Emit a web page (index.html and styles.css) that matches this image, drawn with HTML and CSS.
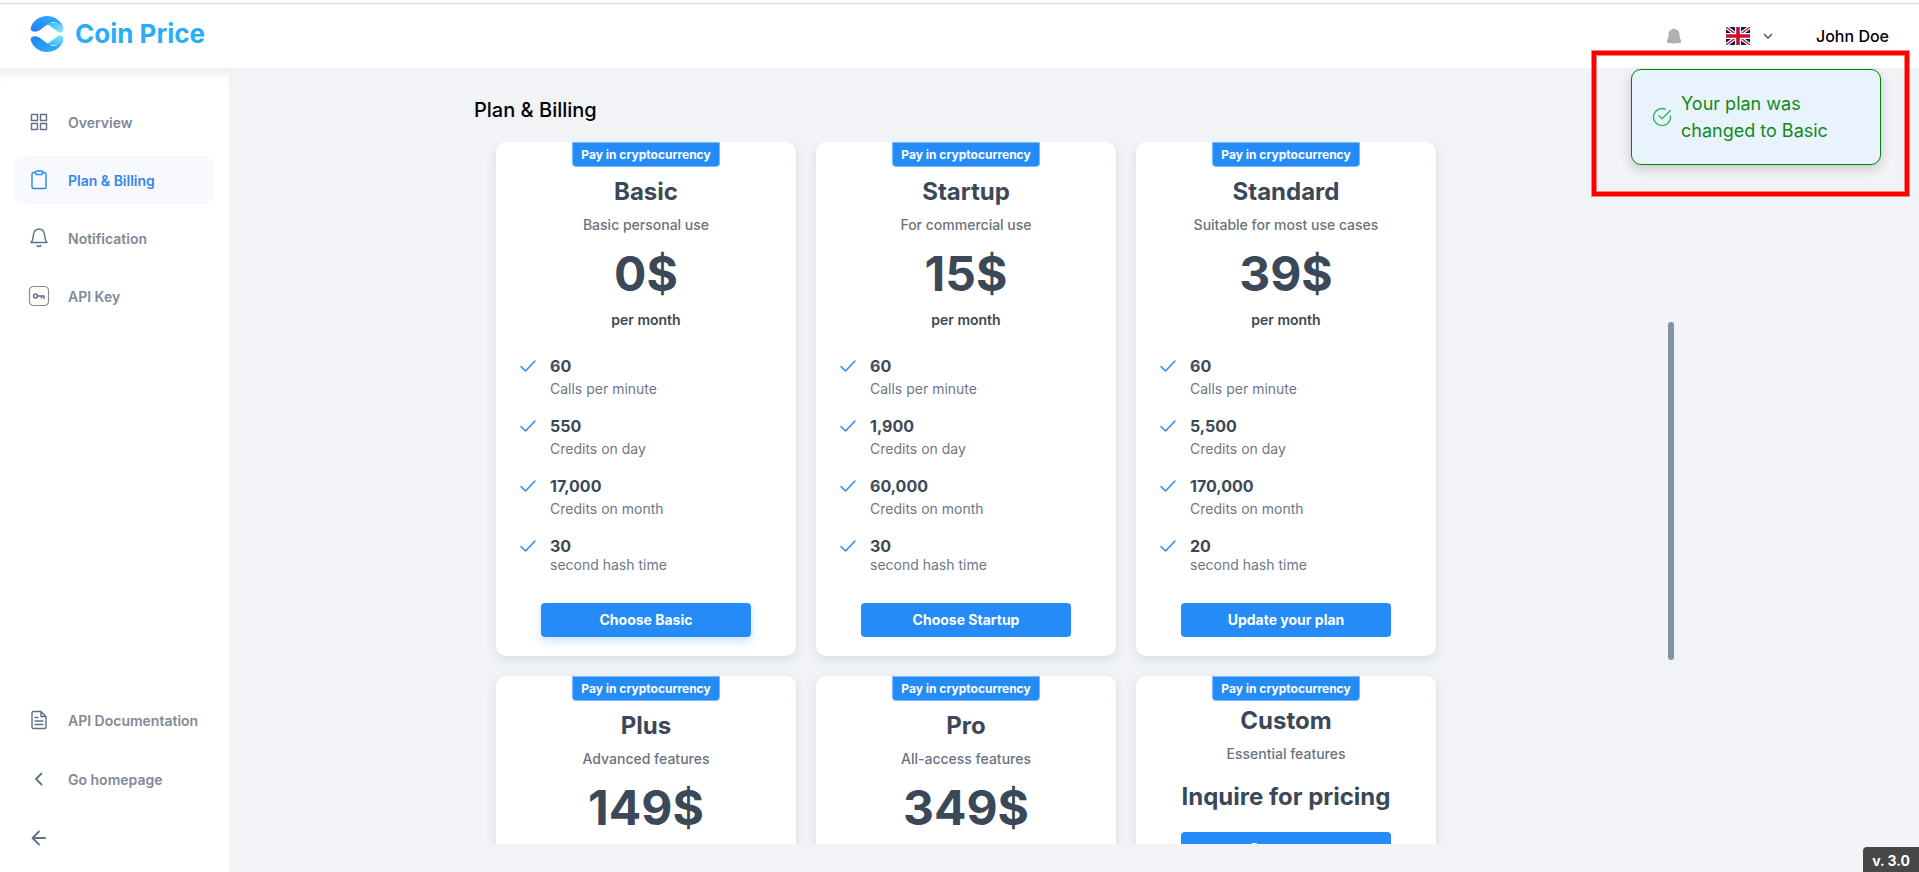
FILE: index.html
```html
<!DOCTYPE html>
<html lang="en">
<head>
<meta charset="utf-8">
<title>Coin Price - Plan &amp; Billing</title>
<link rel="stylesheet" href="styles.css">
</head>
<body>
<svg class="defs" aria-hidden="true">
  <defs>
    <symbol id="check" viewBox="0 0 16 12"><path d="M1 6.500l4.500 4.500L15 1" fill="none" stroke="currentColor" stroke-width="1.500" stroke-linecap="round" stroke-linejoin="round"/></symbol>
    <linearGradient id="blue" x1="0" y1="1" x2="1" y2="0"><stop offset="0" stop-color="#2080f8"/><stop offset="1" stop-color="#35b2f8"/></linearGradient>
    <linearGradient id="blue2" x1="1" y1="1" x2="0" y2="0"><stop offset="0" stop-color="#35b2f8"/><stop offset="1" stop-color="#2080f8"/></linearGradient>
    <linearGradient id="cyan" x1="0" y1="0" x2="1" y2="1"><stop offset="0" stop-color="#2fb6f5"/><stop offset="1" stop-color="#8fe2fe"/></linearGradient>
    <linearGradient id="cyan2" x1="0" y1="1" x2="1" y2="0"><stop offset="0" stop-color="#2fb9f3"/><stop offset="1" stop-color="#86dcfe"/></linearGradient>
  </defs>
</svg>
<header class="header">
  <a class="logo" href="#">
    <svg width="34" height="36" viewBox="0 0 34 36" aria-hidden="true">
      <path d="M13 11C15 8 18 7 21 7h10c2 2 3 6 2 8-1 2-4 2-6 0l-6-4c-3-3-5-3-8 0z" fill="url(#cyan)"/>
      <path d="M13 25c2 3 5 4 8 4h10c2-2 3-6 2-8-1-2-4-2-6 0l-6 4c-3 3-5 3-8 0z" fill="url(#cyan2)"/>
      <path d="M1 11C3 5 9 0 17 0c7 0 13 4 15 9-4-3-10-4-14-1l-8 6c-3 2-6 2-8 1-2-1-1-3-1-4z" fill="url(#blue)"/>
      <path d="M1 25c2 6 8 11 16 11 7 0 13-4 15-9-4 3-10 4-14 1l-8-6c-3-2-6-2-8-1-2 1-1 3-1 4z" fill="url(#blue2)"/>
    </svg>
    <span>Coin Price</span>
  </a>
  <div class="tools">
    <button class="icon-button" type="button" aria-label="Notifications">
      <svg width="14" height="15" viewBox="0 0 14 15"><path d="M7 0c3.300 0 5.500 2.300 5.500 5.500 0 2.500.3 3.500.9 4.500.4.700.6 1.500.6 2.400 0 1.200-.6 1.600-1.800 1.600H9.500c-1 .8-4 .8-5 0H1.800C.6 14 0 13.600 0 12.400c0-.9.2-1.700.6-2.400.6-1 .9-2 .9-4.500C1.500 2.300 3.700 0 7 0z" fill="#aeafb1"/></svg>
    </button>
    <button class="language" type="button" aria-label="Language: English">
      <svg width="24" height="18" viewBox="0 0 24 18">
        <path d="M0 0h24v18H0z" fill="#012169"/>
        <path d="M0 0l24 18M24 0L0 18" stroke="#fff" stroke-width="3.600"/>
        <path d="M0 0l24 18M24 0L0 18" stroke="#c8102e" stroke-width="1.300"/>
        <path d="M12 0v18M0 9h24" stroke="#fff" stroke-width="6"/>
        <path d="M12 0v18M0 9h24" stroke="#c8102e" stroke-width="3.600"/>
      </svg>
      <svg width="10" height="6" viewBox="0 0 10 6"><path d="M1 1l4 4 4-4" fill="none" stroke="#3f4d60" stroke-width="1.300"/></svg>
    </button>
    <a class="user" href="#">John Doe</a>
  </div>
</header>
<div class="layout">
  <nav class="sidebar" aria-label="Main">
    <div class="nav-group">
      <a class="nav-link" href="#">
        <svg width="22" height="22" viewBox="0 0 22 22"><path d="M3.500 3.500h6v6h-6zM12.500 3.500h6v6h-6zM3.500 12.500h6v6h-6zM12.500 12.500h6v6h-6z"/></svg>
        <span>Overview</span></a>
      <a class="nav-link active" href="#" aria-current="page">
        <svg width="22" height="22" viewBox="0 0 22 22"><path d="M7.500 3.500h-2a1.500 1.500 0 0 0-1.500 1.500v13a1.500 1.500 0 0 0 1.500 1.500h11a1.500 1.500 0 0 0 1.500-1.500V5a1.500 1.500 0 0 0-1.500-1.500h-2"/><rect x="7.500" y="2" width="7" height="3.500" rx="1"/></svg>
        <span>Plan &amp; Billing</span></a>
      <a class="nav-link" href="#">
        <svg width="22" height="22" viewBox="0 0 22 22"><path d="M3 15.500h16c-2-2-2-4-2.500-8C16 4 14 2 11 2S6 4 5.500 7.500c-.5 4-.5 6-2.500 8zM9 18.500c1 1.300 3 1.300 4 0"/></svg>
        <span>Notification</span></a>
      <a class="nav-link" href="#">
        <svg width="22" height="22" viewBox="0 0 22 22"><rect class="thin" x="1.500" y="1.500" width="19" height="19" rx="4"/><circle cx="7.500" cy="11" r="2"/><path d="M9.500 11H16v2.500M13.500 11v2"/></svg>
        <span>API Key</span></a>
    </div>
    <div class="nav-group nav-bottom">
      <a class="nav-link" href="#">
        <svg width="22" height="22" viewBox="0 0 22 22"><path d="M13 2.500H5.500A1.500 1.500 0 0 0 4 4v14a1.500 1.500 0 0 0 1.500 1.500h11A1.500 1.500 0 0 0 18 18V7.500zM13 2.500v5h5M7 8.500h3M7 12h8M7 15.500h8"/></svg>
        <span>API Documentation</span></a>
      <a class="nav-link" href="#">
        <svg width="22" height="22" viewBox="0 0 22 22"><path class="bold" d="M13.500 5.500L8 11l5.500 5.500"/></svg>
        <span>Go homepage</span></a>
      <button class="nav-link" type="button" aria-label="Collapse menu">
        <svg width="22" height="22" viewBox="0 0 22 22"><path class="bold" d="M17 11H5M11 4.500L4.500 11l6.500 6.500"/></svg>
      </button>
    </div>
  </nav>
  <main class="main">
    <div class="content">
      <h1 class="page-title">Plan &amp; Billing</h1>
      <div class="scroll-area">
        <div class="plans">
          <section class="card">
            <span class="badge">Pay in cryptocurrency</span>
            <h2 class="name">Basic</h2>
            <p class="summary">Basic personal use</p>
            <p class="price">0$</p>
            <p class="period">per month</p>
            <ul class="features">
              <li><svg class="check"><use href="#check"/></svg><div><b>60</b><span>Calls per minute</span></div></li>
              <li><svg class="check"><use href="#check"/></svg><div><b>550</b><span>Credits on day</span></div></li>
              <li><svg class="check"><use href="#check"/></svg><div><b>17,000</b><span>Credits on month</span></div></li>
              <li><svg class="check"><use href="#check"/></svg><div class="tight"><b>30</b><span>second hash time</span></div></li>
            </ul>
            <button class="choose raised" type="button">Choose Basic</button>
          </section>
          <section class="card">
            <span class="badge">Pay in cryptocurrency</span>
            <h2 class="name">Startup</h2>
            <p class="summary">For commercial use</p>
            <p class="price">15$</p>
            <p class="period">per month</p>
            <ul class="features">
              <li><svg class="check"><use href="#check"/></svg><div><b>60</b><span>Calls per minute</span></div></li>
              <li><svg class="check"><use href="#check"/></svg><div><b>1,900</b><span>Credits on day</span></div></li>
              <li><svg class="check"><use href="#check"/></svg><div><b>60,000</b><span>Credits on month</span></div></li>
              <li><svg class="check"><use href="#check"/></svg><div class="tight"><b>30</b><span>second hash time</span></div></li>
            </ul>
            <button class="choose" type="button">Choose Startup</button>
          </section>
          <section class="card">
            <span class="badge">Pay in cryptocurrency</span>
            <h2 class="name">Standard</h2>
            <p class="summary">Suitable for most use cases</p>
            <p class="price">39$</p>
            <p class="period">per month</p>
            <ul class="features">
              <li><svg class="check"><use href="#check"/></svg><div><b>60</b><span>Calls per minute</span></div></li>
              <li><svg class="check"><use href="#check"/></svg><div><b>5,500</b><span>Credits on day</span></div></li>
              <li><svg class="check"><use href="#check"/></svg><div><b>170,000</b><span>Credits on month</span></div></li>
              <li><svg class="check"><use href="#check"/></svg><div class="tight"><b>20</b><span>second hash time</span></div></li>
            </ul>
            <button class="choose" type="button">Update your plan</button>
          </section>
          <section class="card">
            <span class="badge">Pay in cryptocurrency</span>
            <h2 class="name">Plus</h2>
            <p class="summary">Advanced features</p>
            <p class="price">149$</p>
          </section>
          <section class="card">
            <span class="badge">Pay in cryptocurrency</span>
            <h2 class="name">Pro</h2>
            <p class="summary">All-access features</p>
            <p class="price">349$</p>
          </section>
          <section class="card custom">
            <span class="badge">Pay in cryptocurrency</span>
            <h2 class="name">Custom</h2>
            <p class="summary">Essential features</p>
            <p class="inquire">Inquire for pricing</p>
            <button class="choose" type="button">Contact us</button>
          </section>
        </div>
        <div class="track"><div class="thumb"></div></div>
      </div>
    </div>
  </main>
</div>
<div class="highlight">
  <div class="toast" role="status">
    <svg width="20" height="20" viewBox="0 0 20 20" fill="none" stroke="#2bb859" stroke-width="1.300" stroke-linecap="round" stroke-linejoin="round" aria-hidden="true"><path d="M18.500 9v1a8.500 8.500 0 1 1-5-7.700M7 8.800l3 3 8.500-8.300"/></svg>
    <p>Your plan was changed to Basic</p>
  </div>
</div>
<div class="version">v. 3.0</div>
</body>
</html>
```
FILE: styles.css
```css
* { box-sizing: border-box; }
body {
  margin: 0;
  height: 100vh;
  display: flex;
  flex-direction: column;
  overflow: hidden;
  background: #f1f3f7;
  color: #3b4858;
  font-family: Inter, "Liberation Sans", sans-serif;
  font-size: 14px;
  line-height: 20px;
}
h1, h2, p, ul { margin: 0; padding: 0; }
a { color: inherit; text-decoration: none; }
button { font: inherit; border: 0; padding: 0; background: none; cursor: pointer; }
svg { display: block; flex: none; }
.defs { position: absolute; width: 0; height: 0; }

.header {
  flex: none;
  height: 68px;
  padding: 0 30px;
  display: flex;
  align-items: center;
  justify-content: space-between;
  position: relative;
  z-index: 1;
  background: linear-gradient(#fff 3px, #d9dadc 3px, #d9dadc 4px, #fff 4px);
}
.logo { display: flex; align-items: center; gap: 11px; color: #29adfa; font-size: 26px; line-height: 36px; font-weight: 700; }
.tools { display: flex; align-items: center; padding-top: 4px; }
.language { display: flex; align-items: center; gap: 13px; margin: 0 43px 0 45px; }
.user { color: #000; font-size: 16px; font-weight: 500; }

.layout { flex: 1; min-height: 0; display: flex; }
.sidebar {
  flex: none;
  width: 229px;
  padding: 30px 14px 10px;
  display: flex;
  flex-direction: column;
  justify-content: space-between;
  background: #fff;
  box-shadow: inset 0 14px 12px -10px #e6e8ec;
}
.nav-group { display: flex; flex-direction: column; gap: 10px; }
.nav-bottom { gap: 11px; }
.nav-link {
  width: 200px;
  height: 48px;
  padding-left: 14px;
  display: flex;
  align-items: center;
  gap: 18px;
  border-radius: 10px;
  color: #7f8997;
  font-weight: 600;
  white-space: nowrap;
}
.nav-link span { padding-top: 2px; }
.nav-link svg { fill: none; stroke: #607085; stroke-width: 1.4; stroke-linecap: round; stroke-linejoin: round; }
.nav-link svg .thin { stroke: #828c9a; stroke-width: 1.2; }
.nav-link svg .bold { stroke-width: 1.8; }
.nav-link.active { background: #f8f9fc; color: #3385f0; }
.nav-link.active svg { stroke: #248bf7; }

.main { flex: 1; min-width: 0; padding: 30px 20px 28px; display: flex; justify-content: center; }
.content { width: 100%; max-width: 1200px; display: flex; flex-direction: column; }
.page-title { color: #000; font-size: 20px; line-height: 24px; font-weight: 500; }
.scroll-area { flex: 1; min-height: 0; margin: 20px 0 0; display: flex; justify-content: space-between; overflow: hidden; }
.plans { padding-left: 22px; display: grid; grid-template-columns: repeat(3, 300px); grid-auto-rows: 514px; gap: 20px; }
.track { padding-top: 180px; }
.thumb { width: 6px; height: 338px; border-radius: 3px; background: #8492a6; }

.card {
  display: flex;
  flex-direction: column;
  align-items: center;
  border-radius: 10px;
  background: #fff;
  box-shadow: 0 4px 12px rgba(60, 72, 88, 0.12);
}
.badge {
  padding: 2px 8px 1px;
  border: 1px solid #7ab8fa;
  border-radius: 0 0 4px 4px;
  background: #248bf7;
  color: #fff;
  font-size: 12px;
  font-weight: 700;
}
.name { margin-top: 10px; font-size: 24px; line-height: 30px; font-weight: 700; }
.summary { margin-top: 8px; color: #69727f; font-weight: 500; }
.price { margin-top: 10px; font-size: 48px; line-height: 58px; font-weight: 700; }
.period { margin-top: 7px; font-weight: 600; }
.features { width: 100%; margin-top: 26px; padding: 0 24px; display: grid; gap: 17px; list-style: none; }
.features li { display: flex; gap: 14px; }
.features b, .features span { display: block; }
.features b { font-size: 16px; font-weight: 700; }
.features span { margin-top: 3px; color: #6f7782; }
.features .tight span { margin-top: -1px; }
.check { width: 16px; height: 12px; margin-top: 4px; color: #248bf7; }
.choose { width: 210px; height: 34px; margin-top: 28px; border-radius: 4px; background: #248bf7; color: #fff; font-weight: 700; }
.raised { box-shadow: 0 4px 10px rgba(36, 139, 247, 0.25); }
.custom .name { margin-top: 5px; }
.inquire { margin-top: 18px; font-size: 24px; line-height: 30px; font-weight: 700; }
.custom .choose { margin-top: 20px; }

.highlight {
  position: absolute;
  z-index: 2;
  top: 51px;
  right: 10px;
  padding: 14px 24px 27px 35px;
  border: 4px solid #f00;
  box-shadow: 0 0 0 1px #ff7f7f, inset 0 0 0 1px #ff7f7f;
}
.toast {
  width: 250px;
  padding: 20px;
  display: flex;
  align-items: center;
  gap: 9px;
  border: 1px solid #008000;
  border-radius: 10px;
  background: #e8f3fe;
  box-shadow: 0 4px 12px rgba(0, 0, 0, 0.18);
  color: #108a18;
  font-size: 18px;
  line-height: 27px;
}
.version {
  position: absolute;
  right: 0;
  bottom: 0;
  padding: 4px 9px 1px;
  border-radius: 4px 0 0 0;
  background: #474747;
  color: #fff;
  font-weight: 700;
}
```
